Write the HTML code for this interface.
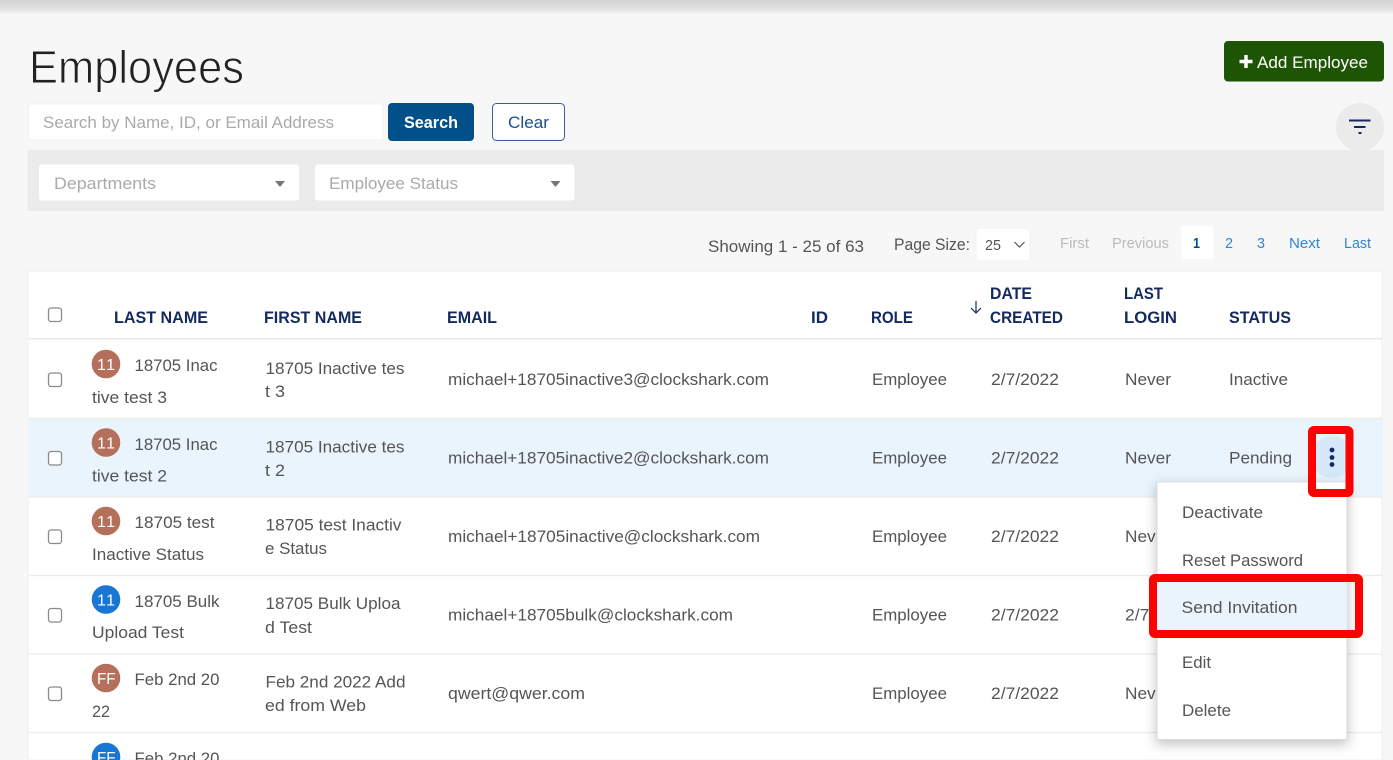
<!DOCTYPE html>
<html lang="en"><head><meta charset="utf-8"><title>Employees</title>
<style>
html,body{margin:0;padding:0;background:#f7f7f7;width:1393px;height:760px;overflow:hidden}
svg{display:block;filter:blur(.35px)}
text{font-family:"Liberation Sans",sans-serif;font-size:17px;fill:#555;white-space:pre}
.h{font-weight:bold;fill:#14295e;font-size:17px}
.p{fill:#aaa;font-size:17px}
.s{font-size:14.5px}
.l{fill:#2e86d6}
.g{fill:#bbb}
.a{fill:#fff;font-size:16px}
</style></head><body>
<svg xmlns="http://www.w3.org/2000/svg" width="1393" height="760" viewBox="0 0 1393 760">
<defs>
<linearGradient id="t" x1="0" y1="0" x2="0" y2="1"><stop offset="0" stop-color="#d2d2d2"/><stop offset=".6" stop-color="#e2e2e2"/><stop offset="1" stop-color="#f7f7f7"/></linearGradient>
<filter id="sh" x="-20%" y="-20%" width="140%" height="140%"><feDropShadow dx="0" dy="4" stdDeviation="6" flood-color="#000" flood-opacity=".25"/></filter>
</defs>
<rect width="1393" height="760" fill="#f7f7f7"/>
<rect width="1393" height="15" fill="url(#t)"/>

<text x="29" y="83" textLength="215" lengthAdjust="spacingAndGlyphs" style="font-size:46px;fill:#222;stroke:#f7f7f7;stroke-width:.9px">Employees</text>

<rect x="1224" y="41" width="160" height="40.500" rx="4" fill="#1e5505"/>
<path d="M1246 55v13M1239.500 61.500h13" stroke="#fff" stroke-width="3.500"/>
<text x="1257" y="68" textLength="111" lengthAdjust="spacingAndGlyphs" style="fill:#fff">Add Employee</text>

<rect x="28.500" y="104" width="354.500" height="36" rx="3" fill="#fff" stroke="#f0f0f0"/>
<text class="p" x="43" y="128" textLength="291" lengthAdjust="spacingAndGlyphs">Search by Name, ID, or Email Address</text>
<rect x="388" y="103" width="86" height="38" rx="4" fill="#02508a"/>
<text x="404" y="128" textLength="54" lengthAdjust="spacingAndGlyphs" style="fill:#fff;font-weight:bold">Search</text>
<rect x="492.500" y="103.500" width="72" height="37" rx="4" fill="#fff" stroke="#3d5a9e"/>
<text x="508" y="128" textLength="41" lengthAdjust="spacingAndGlyphs" style="fill:#1c4f8e">Clear</text>

<ellipse cx="1360" cy="127" rx="24" ry="24" fill="#ebebeb"/>
<rect x="27.500" y="150" width="1356.500" height="61" fill="#ebebeb"/>
<path d="M1349 120.500h21.500M1354 127h11.500M1358.500 133h3" stroke="#14295e" stroke-width="2"/>

<rect x="39" y="164.500" width="260" height="36" rx="3" fill="#fff"/>
<text class="p" x="54" y="189" textLength="102" lengthAdjust="spacingAndGlyphs">Departments</text>
<path d="M275 181h10l-5 6z" fill="#777"/>
<rect x="315" y="164.500" width="259.500" height="36" rx="3" fill="#fff"/>
<text class="p" x="329" y="189" textLength="129" lengthAdjust="spacingAndGlyphs">Employee Status</text>
<path d="M550.500 181h10l-5 6z" fill="#777"/>

<text x="708" y="252" textLength="156" lengthAdjust="spacingAndGlyphs">Showing 1 - 25 of 63</text>
<text x="894" y="250" textLength="76" lengthAdjust="spacingAndGlyphs">Page Size:</text>
<rect x="976" y="228" width="54" height="33" rx="3" fill="#fff" stroke="#f0f0f0"/>
<text class="s" x="985" y="250" textLength="16" lengthAdjust="spacingAndGlyphs">25</text>
<path d="M1014.500 242l5 5 5-5" fill="none" stroke="#555" stroke-width="1.200"/>
<text class="s g" x="1060" y="248" textLength="29" lengthAdjust="spacingAndGlyphs">First</text>
<text class="s g" x="1112" y="248" textLength="57" lengthAdjust="spacingAndGlyphs">Previous</text>
<rect x="1181" y="226" width="32" height="33" fill="#fff"/>
<text class="s" x="1193" y="248" textLength="7" lengthAdjust="spacingAndGlyphs" style="fill:#02508a;font-weight:bold">1</text>
<text class="s l" x="1225" y="248" textLength="8" lengthAdjust="spacingAndGlyphs">2</text>
<text class="s l" x="1257" y="248" textLength="8" lengthAdjust="spacingAndGlyphs">3</text>
<text class="s l" x="1289" y="248" textLength="31" lengthAdjust="spacingAndGlyphs">Next</text>
<text class="s l" x="1344" y="248" textLength="27" lengthAdjust="spacingAndGlyphs">Last</text>

<rect x="28" y="271" width="1354" height="489" fill="#fff" stroke="#efefef"/>
<rect x="29" y="338" width="1353" height="1.500" fill="#e8e8e8"/>
<rect x="48.500" y="308" width="13" height="13.500" rx="2.500" fill="#fff" stroke="#8a8a8a" stroke-width="1.300"/>
<text class="h" x="114" y="323" textLength="94" lengthAdjust="spacingAndGlyphs">LAST NAME</text>
<text class="h" x="264" y="323" textLength="98" lengthAdjust="spacingAndGlyphs">FIRST NAME</text>
<text class="h" x="447" y="323" textLength="50" lengthAdjust="spacingAndGlyphs">EMAIL</text>
<text class="h" x="811" y="323" textLength="17" lengthAdjust="spacingAndGlyphs">ID</text>
<text class="h" x="871" y="323" textLength="42" lengthAdjust="spacingAndGlyphs">ROLE</text>
<text class="h" x="990" y="299" textLength="42" lengthAdjust="spacingAndGlyphs">DATE</text>
<text class="h" x="990" y="323" textLength="73" lengthAdjust="spacingAndGlyphs">CREATED</text>
<text class="h" x="1124" y="299" textLength="39" lengthAdjust="spacingAndGlyphs">LAST</text>
<text class="h" x="1124" y="323" textLength="53" lengthAdjust="spacingAndGlyphs">LOGIN</text>
<text class="h" x="1229" y="323" textLength="62" lengthAdjust="spacingAndGlyphs">STATUS</text>
<path d="M976 301v12M971 308l5 5 5-5" fill="none" stroke="#14295e" stroke-width="1.200"/>

<!-- row backgrounds -->
<rect x="29" y="418.500" width="1353" height="78" fill="#e9f4fd"/>
<path d="M29 418.500h1353M29 497h1353M29 575.500h1353M29 654h1353M29 732.500h1353" stroke="#ececec" stroke-width="1.200"/>

<!-- row 1 -->
<rect x="48.500" y="373" width="13" height="13.500" rx="2.500" fill="#fff" stroke="#8a8a8a" stroke-width="1.300"/>
<circle cx="106" cy="364" r="14.300" fill="#b5705c"/>
<text class="a" x="97" y="370" textLength="18" lengthAdjust="spacing">11</text>
<text x="134.500" y="371" textLength="83" lengthAdjust="spacingAndGlyphs">18705 Inac</text>
<text x="92" y="403" textLength="75" lengthAdjust="spacingAndGlyphs">tive test 3</text>
<text x="265.500" y="374" textLength="139" lengthAdjust="spacingAndGlyphs">18705 Inactive tes</text>
<text x="265" y="397" textLength="20" lengthAdjust="spacingAndGlyphs">t 3</text>
<text x="448" y="385" textLength="321" lengthAdjust="spacingAndGlyphs">michael+18705inactive3@clockshark.com</text>
<text x="872" y="385" textLength="75" lengthAdjust="spacingAndGlyphs">Employee</text>
<text x="991" y="385" textLength="68" lengthAdjust="spacingAndGlyphs">2/7/2022</text>
<text x="1125" y="385" textLength="46" lengthAdjust="spacingAndGlyphs">Never</text>
<text x="1229" y="385" textLength="59" lengthAdjust="spacingAndGlyphs">Inactive</text>

<!-- row 2 -->
<rect x="48.500" y="451.500" width="13" height="13.500" rx="2.500" fill="#fff" stroke="#8a8a8a" stroke-width="1.300"/>
<circle cx="106" cy="442.500" r="14.300" fill="#b5705c"/>
<text class="a" x="97" y="448.500" textLength="18" lengthAdjust="spacing">11</text>
<text x="134.500" y="450" textLength="83" lengthAdjust="spacingAndGlyphs">18705 Inac</text>
<text x="92" y="481.500" textLength="75" lengthAdjust="spacingAndGlyphs">tive test 2</text>
<text x="265.500" y="452.500" textLength="139" lengthAdjust="spacingAndGlyphs">18705 Inactive tes</text>
<text x="265" y="476" textLength="20" lengthAdjust="spacingAndGlyphs">t 2</text>
<text x="448" y="463.500" textLength="321" lengthAdjust="spacingAndGlyphs">michael+18705inactive2@clockshark.com</text>
<text x="872" y="463.500" textLength="75" lengthAdjust="spacingAndGlyphs">Employee</text>
<text x="991" y="463.500" textLength="68" lengthAdjust="spacingAndGlyphs">2/7/2022</text>
<text x="1125" y="463.500" textLength="46" lengthAdjust="spacingAndGlyphs">Never</text>
<text x="1229" y="463.500" textLength="63" lengthAdjust="spacingAndGlyphs">Pending</text>
<circle cx="1332" cy="457" r="21" fill="#d6e9fb"/>
<g fill="#14295e"><circle cx="1332" cy="450" r="2.400"/><circle cx="1332" cy="457.500" r="2.400"/><circle cx="1332" cy="464.500" r="2.400"/></g>

<!-- row 3 -->
<rect x="48.500" y="530" width="13" height="13.500" rx="2.500" fill="#fff" stroke="#8a8a8a" stroke-width="1.300"/>
<circle cx="106" cy="521" r="14.300" fill="#b5705c"/>
<text class="a" x="97" y="527" textLength="18" lengthAdjust="spacing">11</text>
<text x="134.500" y="528" textLength="80" lengthAdjust="spacingAndGlyphs">18705 test</text>
<text x="92" y="560" textLength="112" lengthAdjust="spacingAndGlyphs">Inactive Status</text>
<text x="265.500" y="530.500" textLength="136" lengthAdjust="spacingAndGlyphs">18705 test Inactiv</text>
<text x="265" y="554" textLength="62" lengthAdjust="spacingAndGlyphs">e Status</text>
<text x="448" y="542" textLength="312" lengthAdjust="spacingAndGlyphs">michael+18705inactive@clockshark.com</text>
<text x="872" y="542" textLength="75" lengthAdjust="spacingAndGlyphs">Employee</text>
<text x="991" y="542" textLength="68" lengthAdjust="spacingAndGlyphs">2/7/2022</text>
<text x="1125" y="542" textLength="46" lengthAdjust="spacingAndGlyphs">Never</text>

<!-- row 4 -->
<rect x="48.500" y="608.500" width="13" height="13.500" rx="2.500" fill="#fff" stroke="#8a8a8a" stroke-width="1.300"/>
<circle cx="106" cy="599.500" r="14.300" fill="#1976d2"/>
<text class="a" x="97" y="605.500" textLength="18" lengthAdjust="spacing">11</text>
<text x="134.500" y="607" textLength="85" lengthAdjust="spacingAndGlyphs">18705 Bulk</text>
<text x="92" y="638" textLength="92" lengthAdjust="spacingAndGlyphs">Upload Test</text>
<text x="265.500" y="609" textLength="135" lengthAdjust="spacingAndGlyphs">18705 Bulk Uploa</text>
<text x="265" y="633" textLength="47" lengthAdjust="spacingAndGlyphs">d Test</text>
<text x="448" y="620.500" textLength="285" lengthAdjust="spacingAndGlyphs">michael+18705bulk@clockshark.com</text>
<text x="872" y="620.500" textLength="75" lengthAdjust="spacingAndGlyphs">Employee</text>
<text x="991" y="620.500" textLength="68" lengthAdjust="spacingAndGlyphs">2/7/2022</text>
<text x="1125" y="620.500" textLength="68" lengthAdjust="spacingAndGlyphs">2/7/2022</text>

<!-- row 5 -->
<rect x="48.500" y="687" width="13" height="13.500" rx="2.500" fill="#fff" stroke="#8a8a8a" stroke-width="1.300"/>
<circle cx="106" cy="678" r="14.300" fill="#b5705c"/>
<text class="a" x="97" y="684" textLength="18.500" lengthAdjust="spacingAndGlyphs">FF</text>
<text x="134.500" y="685" textLength="85" lengthAdjust="spacingAndGlyphs">Feb 2nd 20</text>
<text x="92" y="717" textLength="18" lengthAdjust="spacingAndGlyphs">22</text>
<text x="265.500" y="687.500" textLength="140" lengthAdjust="spacingAndGlyphs">Feb 2nd 2022 Add</text>
<text x="265" y="711" textLength="101" lengthAdjust="spacingAndGlyphs">ed from Web</text>
<text x="448" y="699" textLength="137" lengthAdjust="spacingAndGlyphs">qwert@qwer.com</text>
<text x="872" y="699" textLength="75" lengthAdjust="spacingAndGlyphs">Employee</text>
<text x="991" y="699" textLength="68" lengthAdjust="spacingAndGlyphs">2/7/2022</text>
<text x="1125" y="699" textLength="46" lengthAdjust="spacingAndGlyphs">Never</text>

<!-- row 6 -->
<circle cx="106" cy="757" r="14.300" fill="#1976d2"/>
<text class="a" x="97" y="763" textLength="18.500" lengthAdjust="spacingAndGlyphs">FF</text>
<text x="134.500" y="764" textLength="85" lengthAdjust="spacingAndGlyphs">Feb 2nd 20</text>

<!-- menu -->
<rect x="1157" y="482" width="190" height="257.500" fill="#fff" stroke="#ddd" filter="url(#sh)"/>
<rect x="1157" y="582" width="190" height="48" fill="#e9f4fd"/>
<text x="1182" y="518" textLength="81" lengthAdjust="spacingAndGlyphs">Deactivate</text>
<text x="1182" y="566" textLength="121" lengthAdjust="spacingAndGlyphs">Reset Password</text>
<text x="1181.500" y="613" textLength="116" lengthAdjust="spacingAndGlyphs">Send Invitation</text>
<text x="1182" y="668" textLength="29" lengthAdjust="spacingAndGlyphs">Edit</text>
<text x="1182" y="716" textLength="49" lengthAdjust="spacingAndGlyphs">Delete</text>

<!-- red annotations -->
<rect x="1312" y="430" width="37.500" height="63" rx="2" fill="none" stroke="#f00" stroke-width="8"/>
<rect x="1153" y="578" width="206" height="56" rx="2" fill="none" stroke="#f00" stroke-width="8"/>
</svg>
</body></html>
